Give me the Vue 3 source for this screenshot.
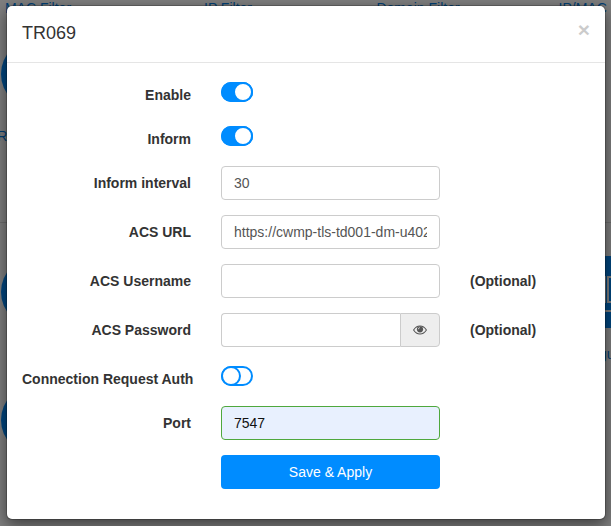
<script setup>
import { ref } from 'vue'

const tiles = [
  ['MAC Filter', 'IP Filter', 'Domain Filter', 'IP/MAC Binding'],
  ['Remote Web', '', '', ''],
  ['', '', '', 'Configuration'],
  ['', '', '', ''],
]
const enable = ref(true)
const inform = ref(true)
const auth = ref(false)
const interval = ref('30')
const url = ref('https://cwmp-tls-td001-dm-u402')
const username = ref('')
const password = ref('')
const port = ref('7547')
</script>

<template>
  <div class="screen">
    <div class="page">
      <div v-for="(row, r) in tiles" :key="r" class="tiles" :class="'tiles-' + r">
        <div v-for="(name, c) in row" :key="c" class="tile">
          <div class="disc" :class="{ square: r === 2 && c === 3, hidden: c === 3 && r !== 2 }">
            <svg v-if="r === 2 && c === 3" width="72" height="72" viewBox="0 0 72 72" fill="none" stroke="#fff" stroke-width="2">
              <path d="M8 21H34V46H8ZM37 46V21H64V46ZM8 55H64" />
            </svg>
          </div>
          <span>{{ name }}</span>
        </div>
      </div>
    </div>
    <div class="backdrop">
      <div class="modal">
        <header>
          <h4>TR069</h4>
          <button class="close" type="button">×</button>
        </header>
        <form @submit.prevent>
          <div class="row short">
            <label>Enable</label>
            <button type="button" class="switch" :class="{ on: enable }" @click="enable = !enable"><i></i></button>
          </div>
          <div class="row short">
            <label>Inform</label>
            <button type="button" class="switch" :class="{ on: inform }" @click="inform = !inform"><i></i></button>
          </div>
          <div class="row">
            <label>Inform interval</label>
            <input v-model="interval" />
          </div>
          <div class="row">
            <label>ACS URL</label>
            <input v-model="url" />
          </div>
          <div class="row">
            <label>ACS Username</label>
            <input v-model="username" />
            <span class="hint">(Optional)</span>
          </div>
          <div class="row">
            <label>ACS Password</label>
            <div class="group">
              <input v-model="password" type="password" />
              <button type="button" class="addon">
                <svg width="14" height="10" viewBox="0 0 14 10">
                  <path d="M.6 5C2 2.7 4.3 1 7 1s5 1.700 6.400 4C12 7.300 9.700 9 7 9S2 7.300.6 5Z" fill="none" stroke="#555" stroke-width="1.100" />
                  <circle cx="7" cy="4.300" r="3.100" fill="#555" />
                  <path d="M5.300 4.300A1.700 1.700 0 0 1 7 2.600" fill="none" stroke="#eee" stroke-width=".7" />
                </svg>
              </button>
            </div>
            <span class="hint">(Optional)</span>
          </div>
          <div class="row short">
            <label>Connection Request Auth</label>
            <button type="button" class="switch" :class="{ on: auth }" @click="auth = !auth"><i></i></button>
          </div>
          <div class="row">
            <label>Port</label>
            <input v-model="port" class="valid" />
          </div>
          <div class="row">
            <span></span>
            <button class="save">Save &amp; Apply</button>
          </div>
        </form>
      </div>
    </div>
  </div>
</template>

<style>
body {
  overflow: hidden;
}
</style>

<style scoped>
.screen,
.screen * {
  box-sizing: border-box;
  font-family: "Liberation Sans", Arial, sans-serif;
}
.screen {
  display: grid;
  width: 611px;
  height: 526px;
  overflow: hidden;
  font-size: 14px;
  line-height: 20px;
  color: #333;
}
.page,
.backdrop {
  grid-area: 1 / 1;
  min-width: 0;
  height: 526px;
  overflow: hidden;
}
.page {
  background: #fff;
}
.tiles {
  display: grid;
  grid-template-columns: repeat(4, 190px);
  margin-left: -57px;
  height: 128px;
}
.tiles-0 {
  margin-top: -90px;
}
.tiles-1 {
  height: 185px;
  border-bottom: 1px solid #ddd;
}
.tiles-2 {
  height: 161px;
  padding-top: 33px;
}
.tile {
  display: flex;
  flex-direction: column;
  align-items: center;
  gap: 16px;
  color: #0080e8;
  white-space: nowrap;
}
.disc {
  width: 74px;
  height: 72px;
  border-radius: 50%;
  background: #008cff;
}
.square {
  border-radius: 0;
}
.hidden {
  visibility: hidden;
}
.backdrop {
  position: relative;
  padding: 5px 0 0 6px;
  background: rgba(0, 0, 0, 0.5);
}
.modal {
  width: 600px;
  height: 515px;
  background: #fff;
  background-clip: padding-box;
  border: 1px solid rgba(0, 0, 0, 0.2);
  border-radius: 6px;
  box-shadow: 0 5px 15px rgba(0, 0, 0, 0.5);
}
header {
  display: flex;
  justify-content: space-between;
  height: 57px;
  padding: 14px 15px 0;
  border-bottom: 1px solid #e5e5e5;
}
h4 {
  margin: 0;
  font-size: 18px;
  font-weight: 400;
  line-height: 26px;
}
button {
  padding: 0;
  border: 0;
}
.close {
  height: 20px;
  background: none;
  color: #000;
  opacity: 0.2;
  font-size: 21px;
  font-weight: 700;
  line-height: 20px;
}
form {
  display: flex;
  flex-direction: column;
  gap: 15px;
  padding: 15px;
}
.row {
  display: grid;
  grid-template-columns: 169px 219px 1fr;
  column-gap: 30px;
  height: 34px;
}
.short {
  height: 29px;
}
label,
.hint {
  padding-top: 7px;
  font-weight: 700;
  white-space: nowrap;
}
label {
  text-align: right;
}
input {
  width: 100%;
  min-width: 0;
  height: 34px;
  padding: 6px 12px;
  border: 1px solid #ccc;
  border-radius: 4px;
  outline: 0;
  background: #fff;
  color: #555;
  font-size: 14px;
}
.valid {
  border-color: #4fa83d;
  background: #e8f0fe;
  color: #111;
}
.group {
  display: flex;
}
.group input {
  flex: 1;
  border-right: 0;
  border-radius: 4px 0 0 4px;
}
.addon {
  display: flex;
  align-items: center;
  justify-content: center;
  width: 40px;
  border: 1px solid #ccc;
  border-radius: 0 4px 4px 0;
  background: #eee;
}
.switch {
  display: flex;
  width: 32px;
  height: 20px;
  margin-top: 4px;
  border-radius: 10px;
  background: #fff;
  box-shadow: inset 0 0 0 2px #008cff;
}
.switch i {
  width: 20px;
  height: 20px;
  border: 2px solid #008cff;
  border-radius: 50%;
  background: #fff;
}
.on {
  justify-content: flex-end;
  background: #008cff;
}
.save {
  border-radius: 4px;
  background: #008cff;
  color: #fff;
  font-size: 14px;
}
</style>
